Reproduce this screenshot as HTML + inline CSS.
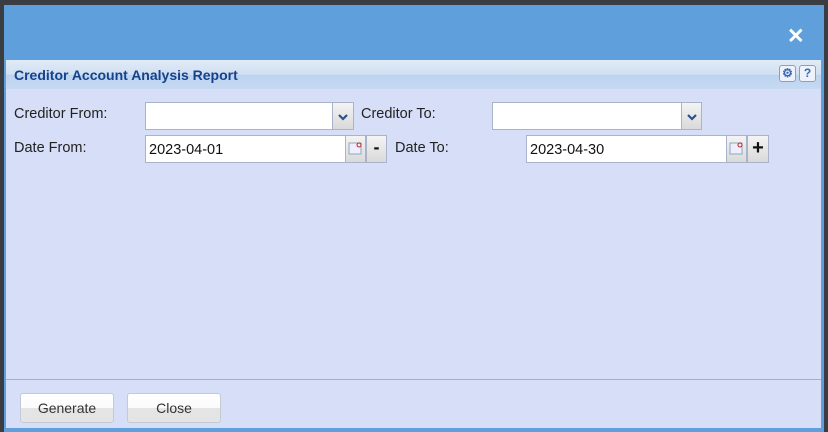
<!DOCTYPE html>
<html><head><style>
*{box-sizing:border-box;margin:0;padding:0}
body{width:828px;height:432px;background:#3a3d42;position:relative;overflow:hidden;font-family:"Liberation Sans",Arial,sans-serif;font-size:14px;color:#222}
.dlg{position:absolute;left:4px;top:5px;width:820px;height:427px;background:#5fa0dc}
.x{position:absolute;left:783px;top:21px;color:#fff;font-size:21px;font-weight:bold;line-height:22px}
.pan{position:absolute;left:6px;top:60px;width:815px;height:368px;background:#d6dff7}
.hdr{position:absolute;left:0;top:0;width:815px;height:29px;background:linear-gradient(#e2ebf7 0,#d0dff2 50%,#bcd3ef 52%,#c6d9f2 100%)}
.hdr span{position:absolute;left:8px;top:7px;font-weight:bold;font-size:14px;color:#15428b}
.ib{position:absolute;top:5px;width:17px;height:17px;border:1px solid #99b;border-radius:3px;background:#eef3fb;color:#3a66b5;font-weight:bold;font-size:12px;text-align:center;line-height:15px}
.lbl{position:absolute;font-size:14.5px;color:#222}
.in{position:absolute;height:28px;background:#fff;border:1px solid #a9b3c9;font-size:14.5px;padding:7px 3px;line-height:14px;color:#111}
.bt{position:absolute;height:28px;border:1px solid #a9b3c9;background:linear-gradient(#f4f4f4,#dadada);text-align:center;color:#1f3d7a}
.fl{position:absolute;left:0;top:319px;width:815px;height:1px;background:#8fb4e3}
.btn{position:absolute;top:333px;width:94px;height:30px;border:1px solid #c4c9d2;border-radius:3px;background:linear-gradient(#fff 0,#fbfbfb 50%,#e4e4e4 51%,#e4e4e4 100%);text-align:center;line-height:28px;font-size:14px;color:#333}
</style></head><body>
<div class="dlg"><div class="x">✕</div></div>
<div class="pan">
<div class="hdr"><span>Creditor Account Analysis Report</span>
<div class="ib" style="left:773px">⚙</div><div class="ib" style="left:793px">?</div></div>
<div class="lbl" style="left:8px;top:46px">Creditor From:</div>
<div class="in" style="left:139px;top:42px;width:188px"></div>
<div class="bt" style="left:326px;top:42px;width:22px"><svg width="20" height="26"><path d="M6 12l4 4 4-4" stroke="#2d4f8a" stroke-width="2.2" fill="none"/></svg></div>
<div class="lbl" style="left:355px;top:46px">Creditor To:</div>
<div class="in" style="left:486px;top:42px;width:190px"></div>
<div class="bt" style="left:675px;top:42px;width:21px"><svg width="20" height="26"><path d="M6 12l4 4 4-4" stroke="#2d4f8a" stroke-width="2.2" fill="none"/></svg></div>
<div class="lbl" style="left:8px;top:80px">Date From:</div>
<div class="in" style="left:139px;top:75px;width:201px">2023-04-01</div>
<div class="bt" style="left:339px;top:75px;width:21px"><svg width="19" height="26"><rect x="3" y="7" width="12" height="11" fill="#eef" stroke="#8ab"/><circle cx="13" cy="9" r="2" fill="none" stroke="#b22"/></svg></div>
<div class="bt" style="left:360px;top:75px;width:21px;font-weight:bold;font-size:18px;line-height:22px;color:#111">-</div>
<div class="lbl" style="left:389px;top:80px">Date To:</div>
<div class="in" style="left:520px;top:75px;width:201px">2023-04-30</div>
<div class="bt" style="left:720px;top:75px;width:21px"><svg width="19" height="26"><rect x="3" y="7" width="12" height="11" fill="#eef" stroke="#8ab"/><circle cx="13" cy="9" r="2" fill="none" stroke="#b22"/></svg></div>
<div class="bt" style="left:741px;top:75px;width:22px;font-weight:bold;font-size:20px;line-height:24px;color:#111">+</div>
<div class="fl"></div>
<div class="btn" style="left:14px">Generate</div>
<div class="btn" style="left:121px">Close</div>
</div>
</body></html>
